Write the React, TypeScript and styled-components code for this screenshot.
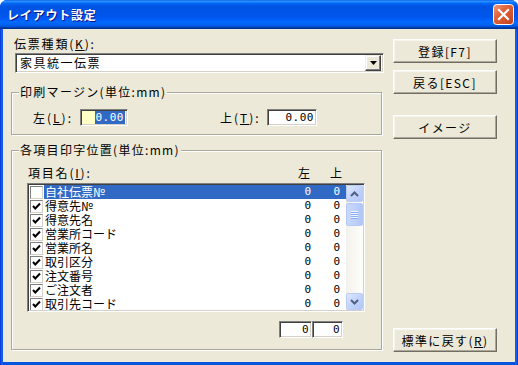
import React from 'react';
import styled, { createGlobalStyle } from 'styled-components';

const GlobalStyle = createGlobalStyle`
  html, body {
    margin: 0;
    padding: 0;
    background: #ffffff;
  }
  body {
    font-family: "MS UI Gothic", "Noto Sans CJK JP", sans-serif;
    font-size: 12px;
    color: #000000;
  }
`;

const Window = styled.div`
  width: 518px;
  height: 365px;
  display: flex;
  flex-direction: column;
  background: linear-gradient(to right, #0831d9 0, #166aee 2px, #0855dd 3px, #0855dd 515px, #166aee 516px, #0831d9 518px);
  border-radius: 7px 7px 0 0;
  overflow: hidden;
`;

const TitleBar = styled.div`
  height: 29px;
  flex: none;
  display: flex;
  align-items: center;
  justify-content: space-between;
  padding: 0 4px 0 7px;
  background: linear-gradient(
    to bottom,
    #0058ee 0%,
    #3593ff 4%,
    #288eff 6%,
    #127dff 8%,
    #036ffc 10%,
    #0262ee 14%,
    #0057e5 20%,
    #0054e3 24%,
    #0055eb 56%,
    #005bf5 66%,
    #026afe 76%,
    #0062ef 86%,
    #0052d6 92%,
    #0040ab 94%,
    #003092 100%
  );
`;

const TitleText = styled.span`
  color: #ffffff;
  font-weight: bold;
  font-size: 12px;
  letter-spacing: 0.8px;
  text-shadow: 1px 1px 0 #0f1089;
`;

const CloseButton = styled.button`
  width: 21px;
  height: 21px;
  padding: 0;
  border: none;
  background: none;
  display: block;
`;

const Body = styled.div`
  flex: 1;
  margin: 0 3px 3px;
  background: #ece9d8;
  display: flex;
  gap: 11px;
  padding: 8px 18px 10px 8px;
`;

const LeftCol = styled.div`
  width: 371px;
  display: flex;
  flex-direction: column;
`;

const RightCol = styled.div`
  width: 104px;
  display: flex;
  flex-direction: column;
  padding-top: 2px;
`;

const U = styled.span`
  text-decoration: underline;
`;

const FieldLabel = styled.div`
  line-height: 14px;
  margin-left: 3px;
  white-space: nowrap;
  letter-spacing: 1.8px;
`;

const Combo = styled.div`
  margin: 2px 0 0 4px;
  width: 369px;
  height: 20px;
  box-sizing: border-box;
  background: #ffffff;
  border: 1px solid;
  border-color: #808080 #ffffff #ffffff #808080;
  box-shadow: inset 1px 1px 0 #404040, inset -1px -1px 0 #d4d0c8;
  display: flex;
  align-items: center;
  padding: 2px 2px 2px 4px;
`;

const ComboText = styled.span`
  flex: 1;
  line-height: 14px;
  letter-spacing: 1.5px;
`;

const ComboArrow = styled.div`
  width: 16px;
  height: 16px;
  box-sizing: border-box;
  background: #ece9d8;
  border: 1px solid;
  border-color: #f1efe2 #404040 #404040 #f1efe2;
  box-shadow: inset -1px -1px 0 #808080, inset 1px 1px 0 #ffffff;
  display: flex;
  align-items: center;
  justify-content: center;
`;

const Group = styled.fieldset<{ $h: number; $mt: number }>`
  margin: ${(p) => p.$mt}px 0 0;
  padding: 0;
  height: ${(p) => p.$h}px;
  box-sizing: border-box;
  border: 1px solid #aca899;
  box-shadow: inset 1px 1px 0 #ffffff, 1px 1px 0 #ffffff;
  min-width: 0;
`;

const Legend = styled.legend`
  margin-left: 7px;
  padding: 0 1px;
  line-height: 14px;
  background: #ece9d8;
  white-space: nowrap;
  letter-spacing: 1.3px;
`;

const MarginRow = styled.div`
  display: flex;
  align-items: center;
  padding: 10px 0 0 21px;
`;

const MarginLabel = styled.span<{ $ml?: number }>`
  width: 47px;
  margin-left: ${(p) => p.$ml ?? 0}px;
  white-space: nowrap;
  letter-spacing: 2px;
`;

const NumInput = styled.div<{ $w: number; $bg?: string }>`
  width: ${(p) => p.$w}px;
  height: 17px;
  box-sizing: border-box;
  background: ${(p) => p.$bg ?? '#ffffff'};
  border: 1px solid;
  border-color: #808080 #ffffff #ffffff #808080;
  box-shadow: inset 1px 1px 0 #404040, inset -1px -1px 0 #d4d0c8;
  display: flex;
  align-items: center;
  justify-content: flex-end;
  padding-right: 2px;
  font-family: "MS Gothic", "DejaVu Sans Mono", monospace;
  font-size: 11px;
  letter-spacing: 0.5px;
`;

const Selected = styled.span`
  background: #316ac5;
  color: #ffffff;
  line-height: 13px;
  padding: 0 1px;
`;

const Inner = styled.div`
  padding: 9px 16px 0 15px;
`;

const HeaderRow = styled.div`
  display: flex;
  line-height: 14px;
`;

const HeaderName = styled.span`
  flex: 1;
  margin-left: 1px;
  letter-spacing: 1.8px;
`;

const HeaderCell = styled.span<{ $mr: number }>`
  margin-right: ${(p) => p.$mr}px;
`;

const ListBox = styled.div`
  margin-top: 3px;
  width: 338px;
  height: 129px;
  box-sizing: border-box;
  background: #ffffff;
  border: 1px solid;
  border-color: #808080 #ffffff #ffffff #808080;
  box-shadow: inset 1px 1px 0 #404040, inset -1px -1px 0 #d4d0c8;
  padding: 1px;
  display: flex;
`;

const Rows = styled.div`
  flex: 1;
  overflow: hidden;
`;

const Row = styled.div`
  height: 14px;
  display: flex;
  align-items: center;
`;

const CheckBox = styled.div`
  width: 13px;
  height: 13px;
  box-sizing: border-box;
  margin-left: 1px;
  background: #ffffff;
  border: 1px solid;
  border-color: #808080 #d4d0c8 #d4d0c8 #808080;
  display: flex;
  align-items: center;
  justify-content: center;
`;

const ItemBar = styled.div<{ $sel?: boolean }>`
  flex: 1;
  height: 14px;
  margin-left: 1px;
  padding: 0 6px 0 1px;
  display: flex;
  align-items: center;
  background: ${(p) => (p.$sel ? '#316ac5' : 'transparent')};
  color: ${(p) => (p.$sel ? '#ffffff' : '#000000')};
  line-height: 14px;
`;

const ItemName = styled.span`
  flex: 1;
  white-space: nowrap;
`;

const ItemNum = styled.span<{ $w: number }>`
  width: ${(p) => p.$w}px;
  text-align: right;
  font-family: "MS Gothic", "DejaVu Sans Mono", monospace;
  font-size: 11px;
`;

const ScrollBar = styled.div`
  width: 17px;
  display: flex;
  flex-direction: column;
  background: linear-gradient(to right, #f3f1ec, #fefefb);
`;

const ScrollButton = styled.div`
  width: 17px;
  height: 17px;
  box-sizing: border-box;
  border: 1px solid #b9ccf6;
  border-radius: 2px;
  background: linear-gradient(135deg, #dfe9fe 0%, #c3d4fb 50%, #b1c7f7 100%);
  display: flex;
  align-items: center;
  justify-content: center;
`;

const Thumb = styled.div`
  margin-top: 1px;
  width: 17px;
  height: 23px;
  box-sizing: border-box;
  border: 1px solid #b5c9f4;
  border-radius: 2px;
  background: linear-gradient(to right, #c9d8fc 0%, #bcd0fb 60%, #b1c6f6 100%);
  display: flex;
  flex-direction: column;
  align-items: center;
  justify-content: center;
  gap: 1px;
`;

const Grip = styled.div`
  width: 7px;
  height: 1px;
  background: #eef4fe;
  box-shadow: 0 1px 0 #8cb0f8;
`;

const Track = styled.div`
  flex: 1;
`;

const BottomRow = styled.div`
  display: flex;
  justify-content: flex-end;
  margin: 9px 22px 0 0;
`;

const Button = styled.button<{ $mt?: number; $auto?: boolean }>`
  width: 104px;
  height: 24px;
  margin-top: ${(p) => (p.$auto ? 'auto' : `${p.$mt ?? 0}px`)};
  padding: 0;
  box-sizing: border-box;
  background: #ece9d8;
  border: 1px solid;
  border-color: #ffffff #716f64 #716f64 #ffffff;
  box-shadow: inset -1px -1px 0 #aca899, inset 1px 1px 0 #f6f5ef;
  font-family: "MS UI Gothic", "Noto Sans CJK JP", sans-serif;
  font-size: 12px;
  color: #000000;
  letter-spacing: 1.4px;
`;

type Item = { name: string; checked: boolean };

const items: Item[] = [
  { name: '自社伝票№', checked: false },
  { name: '得意先№', checked: true },
  { name: '得意先名', checked: true },
  { name: '営業所コード', checked: true },
  { name: '営業所名', checked: true },
  { name: '取引区分', checked: true },
  { name: '注文番号', checked: true },
  { name: 'ご注文者', checked: true },
  { name: '取引先コード', checked: true },
];

function CloseIcon() {
  return (
    <svg width="21" height="21" viewBox="0 0 21 21">
      <defs>
        <linearGradient id="cg" x1="0" y1="0" x2="1" y2="1">
          <stop offset="0" stopColor="#f0a285" />
          <stop offset="0.35" stopColor="#e2663e" />
          <stop offset="1" stopColor="#c2401c" />
        </linearGradient>
      </defs>
      <rect x="0.5" y="0.5" width="20" height="20" rx="3" fill="url(#cg)" stroke="#ffffff" />
      <path d="M6 6 L15 15 M15 6 L6 15" stroke="#ffffff" strokeWidth="2.2" strokeLinecap="square" />
    </svg>
  );
}

function CheckMark() {
  return (
    <svg width="11" height="11" viewBox="0 0 11 11">
      <path d="M2 5 L4.3 7.5 L9 2.5" fill="none" stroke="#000000" strokeWidth="2" />
    </svg>
  );
}

function Chevron({ up }: { up: boolean }) {
  return (
    <svg width="9" height="6" viewBox="0 0 9 6">
      <path
        d={up ? 'M1 5 L4.5 1.5 L8 5' : 'M1 1 L4.5 4.5 L8 1'}
        fill="none"
        stroke="#4d6185"
        strokeWidth="2"
      />
    </svg>
  );
}

export default function App() {
  return (
    <>
      <GlobalStyle />
      <Window>
        <TitleBar>
          <TitleText>レイアウト設定</TitleText>
          <CloseButton>
            <CloseIcon />
          </CloseButton>
        </TitleBar>
        <Body>
          <LeftCol>
            <FieldLabel>
              伝票種類(<U>K</U>):
            </FieldLabel>
            <Combo>
              <ComboText>家具統一伝票</ComboText>
              <ComboArrow>
                <svg width="7" height="4" viewBox="0 0 7 4">
                  <path d="M0 0 H7 L3.5 4 Z" fill="#000000" />
                </svg>
              </ComboArrow>
            </Combo>

            <Group $h={50} $mt={12}>
              <Legend>印刷マージン(単位:mm)</Legend>
              <MarginRow>
                <MarginLabel>
                  左(<U>L</U>):
                </MarginLabel>
                <NumInput $w={48} $bg="#ffffc6">
                  <Selected>0.00</Selected>
                </NumInput>
                <MarginLabel $ml={92}>
                  上(<U>T</U>):
                </MarginLabel>
                <NumInput $w={50}>0.00</NumInput>
              </MarginRow>
            </Group>

            <Group $h={207} $mt={8}>
              <Legend>各項目印字位置(単位:mm)</Legend>
              <Inner>
                <HeaderRow>
                  <HeaderName>
                    項目名(<U>I</U>):
                  </HeaderName>
                  <HeaderCell $mr={20}>左</HeaderCell>
                  <HeaderCell $mr={23}>上</HeaderCell>
                </HeaderRow>
                <ListBox>
                  <Rows>
                    {items.map((it, i) => (
                      <Row key={it.name}>
                        <CheckBox>{it.checked && <CheckMark />}</CheckBox>
                        <ItemBar $sel={i === 0}>
                          <ItemName>{it.name}</ItemName>
                          <ItemNum $w={30}>0</ItemNum>
                          <ItemNum $w={29}>0</ItemNum>
                        </ItemBar>
                      </Row>
                    ))}
                  </Rows>
                  <ScrollBar>
                    <ScrollButton>
                      <Chevron up />
                    </ScrollButton>
                    <Thumb>
                      <Grip />
                      <Grip />
                      <Grip />
                      <Grip />
                    </Thumb>
                    <Track />
                    <ScrollButton>
                      <Chevron up={false} />
                    </ScrollButton>
                  </ScrollBar>
                </ListBox>
                <BottomRow>
                  <NumInput $w={33}>0</NumInput>
                  <NumInput $w={31}>0</NumInput>
                </BottomRow>
              </Inner>
            </Group>
          </LeftCol>

          <RightCol>
            <Button>登録[F7]</Button>
            <Button $mt={7}>戻る[ESC]</Button>
            <Button $mt={21}>イメージ</Button>
            <Button $auto>
              標準に戻す(<U>R</U>)
            </Button>
          </RightCol>
        </Body>
      </Window>
    </>
  );
}
